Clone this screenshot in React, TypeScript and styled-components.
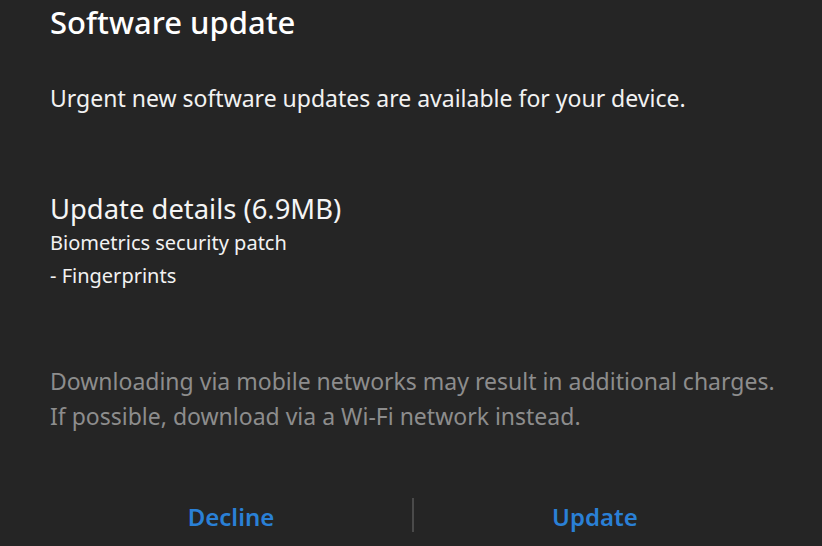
import React from "react";
import styled, { createGlobalStyle } from "styled-components";

const Global = createGlobalStyle`
  html, body { margin: 0; padding: 0; background: #252525; }
  body { font-family: "Noto Sans", "Open Sans", sans-serif; }
`;

const Dialog = styled.div`
  width: 822px;
  height: 546px;
  box-sizing: border-box;
  background: #252525;
  padding: 0 46px 0 50px;
  display: flex;
  flex-direction: column;
  overflow: hidden;
`;

const Title = styled.h1`
  margin: 0;
  font-size: 31px;
  line-height: 44px;
  font-weight: 500;
  color: #ffffff;
  white-space: nowrap;
`;

const Body = styled.p<{ $muted?: boolean; $size?: number; $lh?: number; $top?: number }>`
  margin: ${(p) => p.$top ?? 0}px 0 0 0;
  font-size: ${(p) => p.$size ?? 23}px;
  line-height: ${(p) => p.$lh ?? 34}px;
  color: ${(p) => (p.$muted ? "#8d8d8d" : "#f2f2f2")};
  font-weight: 400;
  white-space: nowrap;
`;

const Subtitle = styled.h2`
  margin: 77px 0 0 0;
  font-size: 27.4px;
  line-height: 34px;
  font-weight: 400;
  color: #f5f5f5;
  white-space: nowrap;
`;

const Footer = styled.div`
  margin-top: auto;
  height: 60px;
  display: grid;
  grid-template-columns: 1fr 2px 1fr;
  align-items: center;
`;

const Action = styled.button`
  background: none;
  border: none;
  padding: 0;
  font-family: inherit;
  font-size: 24px;
  font-weight: 600;
  color: #2a80d6;
  height: 60px;
  text-align: center;
`;

const Divider = styled.div`
  width: 2px;
  height: 34px;
  margin-top: -2px;
  background: #4a4a4a;
`;

export default function App() {
  return (
    <Dialog>
      <Global />
      <Title>Software update</Title>
      <Body $top={37}>Urgent new software updates are available for your device.</Body>
      <Subtitle>Update details (6.9MB)</Subtitle>
      <Body $size={20} $lh={33}>Biometrics security patch</Body>
      <Body $size={20} $lh={33}>- Fingerprints</Body>
      <Body $muted $top={72} $lh={35}>Downloading via mobile networks may result in additional charges.</Body>
      <Body $muted $lh={35}>If possible, download via a Wi-Fi network instead.</Body>
      <Footer>
        <Action>Decline</Action>
        <Divider />
        <Action>Update</Action>
      </Footer>
    </Dialog>
  );
}
